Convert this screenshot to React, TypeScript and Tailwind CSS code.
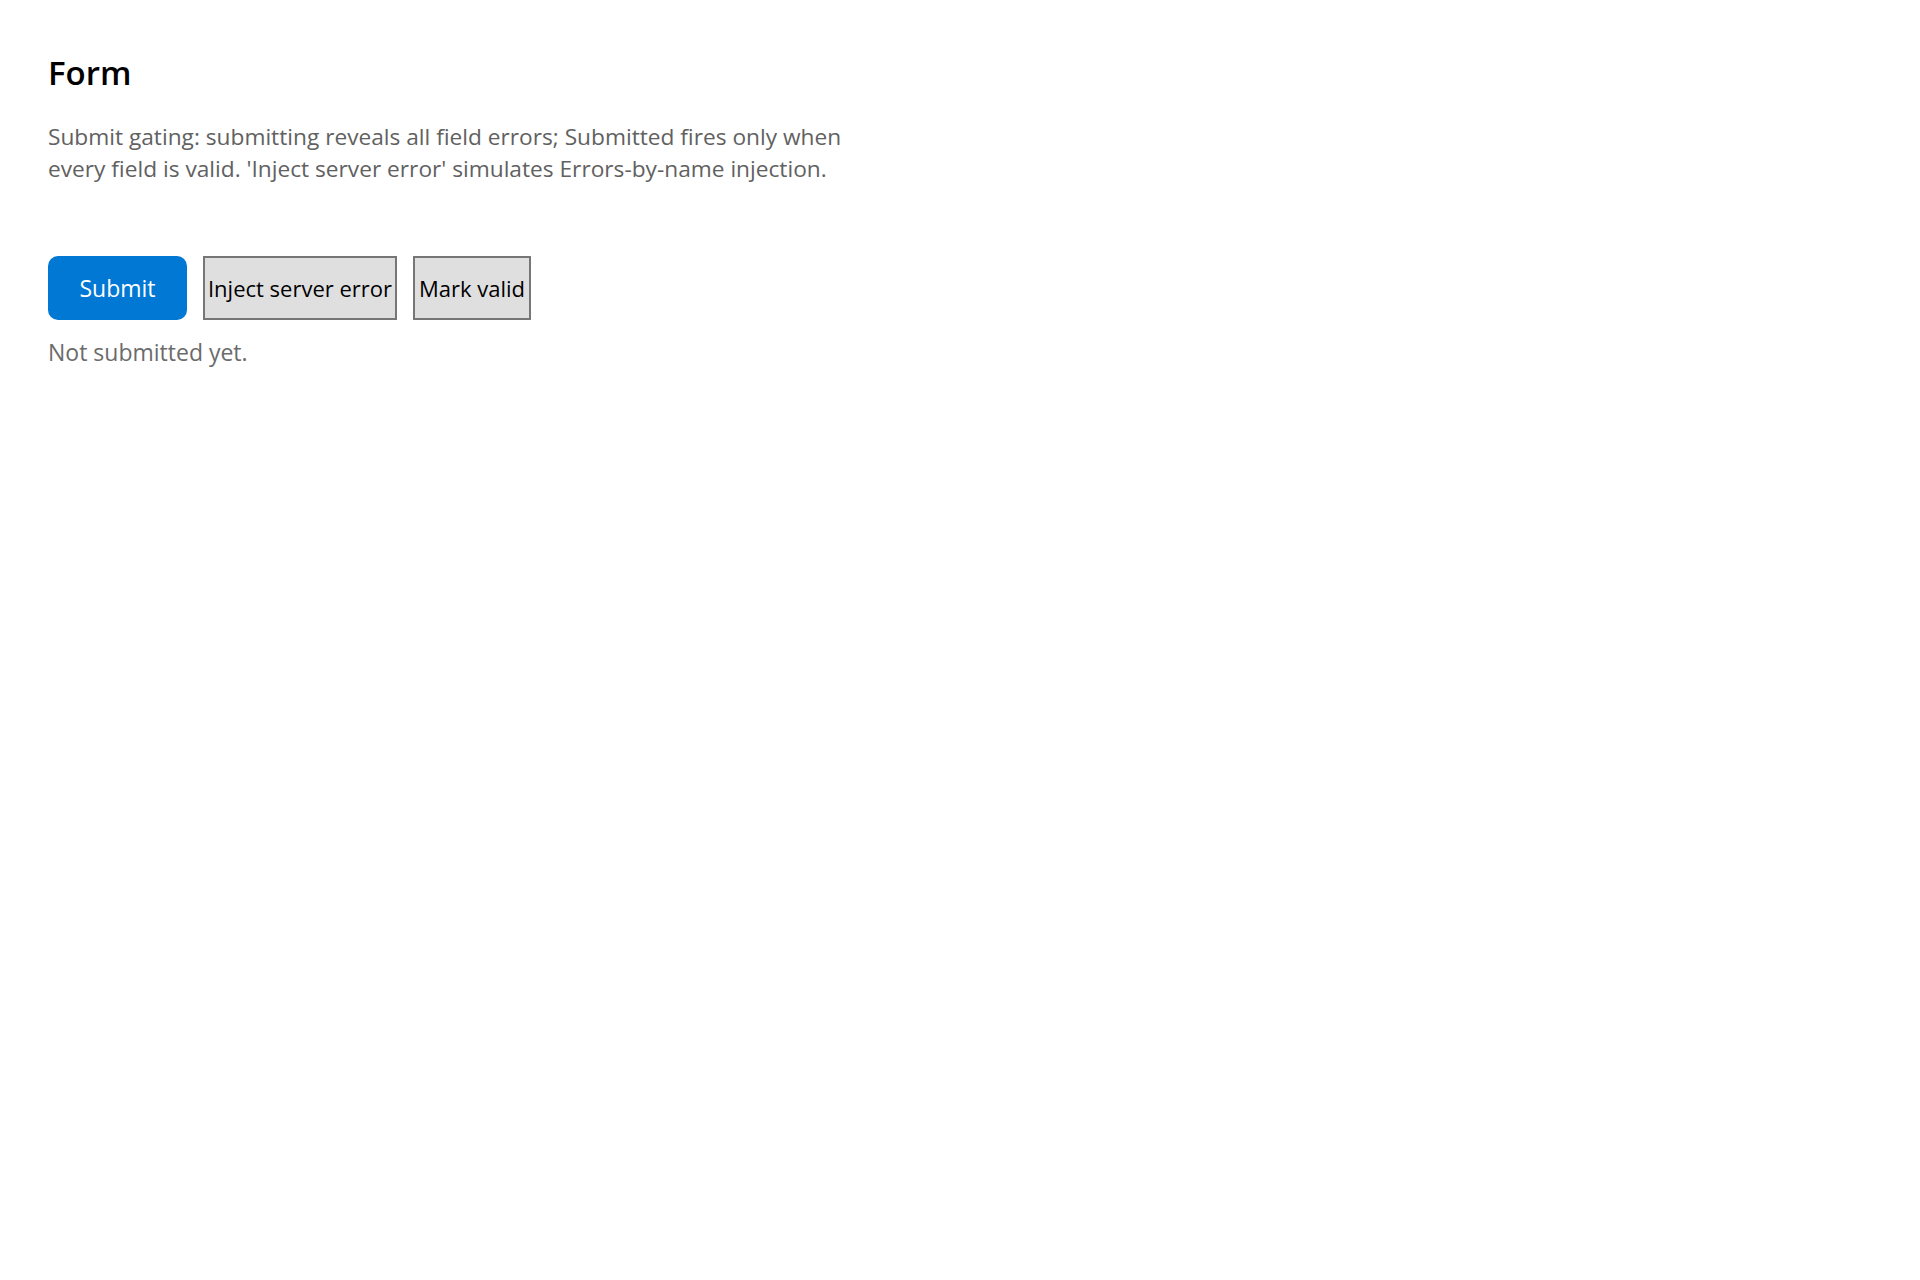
import { useState } from 'react';

type Status = 'idle' | 'invalid' | 'submitted';

export default function App() {
  const [status, setStatus] = useState<Status>('idle');
  const [serverError, setServerError] = useState(false);

  const statusText =
    status === 'submitted'
      ? 'Submitted.'
      : status === 'invalid'
        ? 'Fix the highlighted fields.'
        : 'Not submitted yet.';

  return (
    <div className="min-h-screen bg-white pl-12 pt-[55px] font-['Open_Sans',sans-serif]">
      <h1 className="text-[33px] leading-[36px] font-semibold text-black">Form</h1>
      <p className="mt-[30px] max-w-[830px] text-[22.7px] leading-[32px] text-[#616161]">
        Submit gating: submitting reveals all field errors; Submitted fires only when every field is
        valid. 'Inject server error' simulates Errors-by-name injection.
      </p>

      <div className="mt-[71px] flex items-center gap-4">
        <button
          onClick={() => setStatus(serverError ? 'invalid' : 'submitted')}
          className="h-16 w-[139px] rounded-[10px] bg-[#0078d4] text-[23px] text-white"
        >
          Submit
        </button>
        <button
          onClick={() => setServerError(true)}
          className="h-16 w-[194px] whitespace-nowrap border-2 border-[#767676] bg-[#dfdfdf] text-[22px] text-black"
        >
          Inject server error
        </button>
        <button
          onClick={() => setServerError(false)}
          className="h-16 w-[118px] whitespace-nowrap border-2 border-[#767676] bg-[#dfdfdf] text-[22px] text-black"
        >
          Mark valid
        </button>
      </div>

      <p className="mt-4 text-[23px] leading-[32px] text-[#6b6b6b]">{statusText}</p>
    </div>
  );
}
